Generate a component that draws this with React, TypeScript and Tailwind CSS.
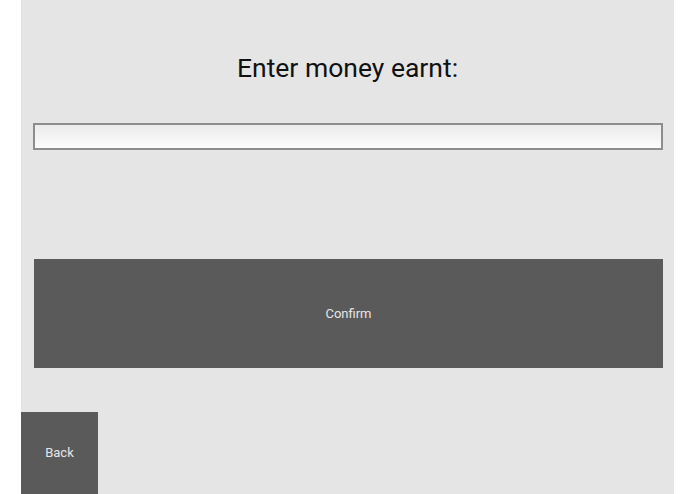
export default function App() {
  return (
    <div className="w-full h-[494px] bg-white px-[21px] font-['Roboto',sans-serif]">
      <div className="h-full bg-[#e5e5e5] flex flex-col">
        <h1 className="mt-[53px] h-[30px] leading-[30px] text-center text-[26.5px] text-[#111111]">
          Enter money earnt:
        </h1>

        <input
          type="text"
          className="mt-[40px] ml-[12px] mr-[11px] h-[27px] border-2 border-[#8d8d8d] bg-gradient-to-b from-[#ebebeb] to-[#fcfcfc] outline-none px-2 text-sm"
        />

        <button className="mt-[109px] ml-[13px] mr-[11px] h-[109px] bg-[#5a5a5a] text-[#e6e6e6] text-[13px]">
          Confirm
        </button>

        <button className="mt-[44px] w-[77px] h-[82px] bg-[#5a5a5a] text-[#e6e6e6] text-[13px]">
          Back
        </button>
      </div>
    </div>
  );
}
